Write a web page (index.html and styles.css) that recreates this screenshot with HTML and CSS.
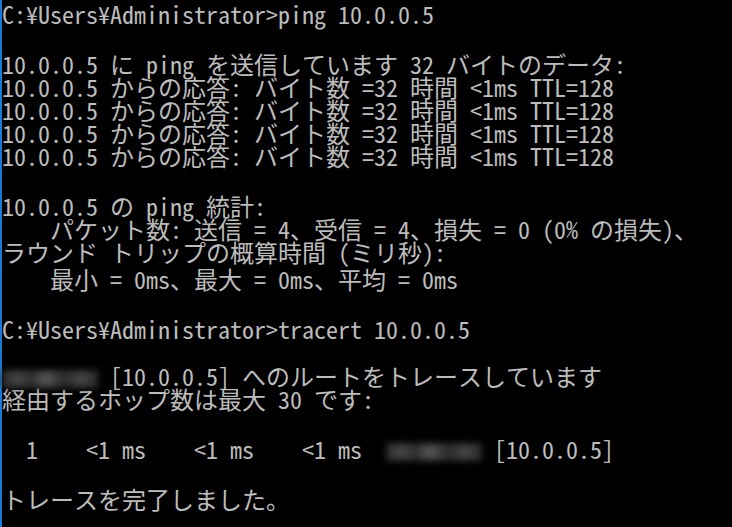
FILE: index.html
```html
<!DOCTYPE html>
<html lang="ja">
<head>
<meta charset="UTF-8"/>
<meta name="viewport" content="width=device-width,initial-scale=1.0"/>
<title>コマンド プロンプト</title>
<link rel="stylesheet" href="styles.css">
</head>
<body>

<div class="console">
  <!-- ping -->
  <div class="line">C:¥Users¥Administrator&gt;ping 10.0.0.5</div>
  <div class="gap"></div>
  <div class="line">10.0.0.5 に ping を送信しています 32 バイトのデータ:</div>
  <div class="line">10.0.0.5 からの応答: バイト数 =32 時間 &lt;1ms TTL=128</div>
  <div class="line">10.0.0.5 からの応答: バイト数 =32 時間 &lt;1ms TTL=128</div>
  <div class="line">10.0.0.5 からの応答: バイト数 =32 時間 &lt;1ms TTL=128</div>
  <div class="line">10.0.0.5 からの応答: バイト数 =32 時間 &lt;1ms TTL=128</div>
  <div class="gap"></div>
  <div class="line">10.0.0.5 の ping 統計:</div>
  <div class="line">    パケット数: 送信 = 4、受信 = 4、損失 = 0 (0% の損失)、</div>
  <div class="line">ラウンド トリップの概算時間 (ミリ秒):</div>
  <div class="line tall">    最小 = 0ms、最大 = 0ms、平均 = 0ms</div>
  <div class="gap"></div>

  <!-- tracert -->
  <div class="line">C:¥Users¥Administrator&gt;tracert 10.0.0.5</div>
  <div class="gap narrow"></div>
  <div class="line"><span class="masked"></span> [10.0.0.5] へのルートをトレースしています</div>
  <div class="line">経由するホップ数は最大 30 です:</div>
  <div class="gap"></div>
  <div class="line">  1    &lt;1 ms    &lt;1 ms    &lt;1 ms  <span class="masked"></span> [10.0.0.5]</div>
  <div class="gap"></div>
  <div class="line">トレースを完了しました。</div>
</div>

</body>
</html>
```

FILE: styles.css
```css
*{margin:0;padding:0;box-sizing:border-box}
html,body{height:100%}
body{background:#000;color:#bcbcbc;overflow:hidden}

/* ---------- console window ---------- */
.console{
  height:100%;border-left:2px solid #1c7ad2;
  padding-top:2px;
  font-family:"Noto Sans Mono CJK JP","Noto Sans CJK JP",monospace;
  font-size:24px
}
.line{height:23px;line-height:23px;white-space:pre}
.line.tall{height:27px;line-height:31px}
.gap{height:27px}
.gap.narrow{height:24px}

/* blurred host name (8 chars wide) */
.masked{
  display:inline-block;width:96px;height:18px;vertical-align:-2px;
  background:
    radial-gradient(circle at 16% 50%,#484848 0,transparent 14px),
    radial-gradient(circle at 46% 50%,#5a5a5a 0,transparent 16px),
    radial-gradient(circle at 82% 50%,#484848 0,transparent 14px),
    #2c2c2c;
  filter:blur(3px)
}
```
